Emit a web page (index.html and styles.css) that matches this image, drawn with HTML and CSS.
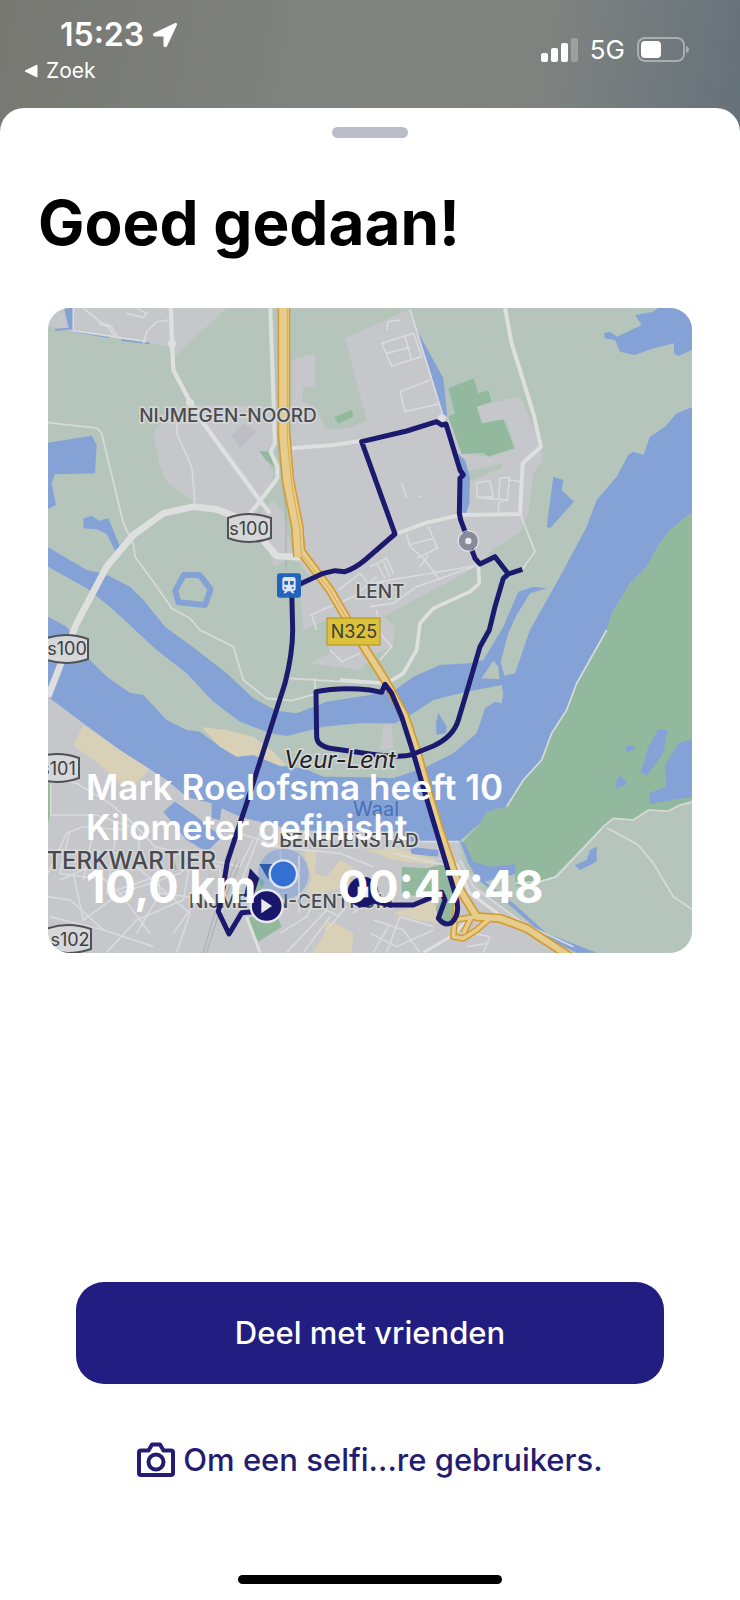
FILE: index.html
```html
<!DOCTYPE html>
<html lang="nl">

<head>
    <meta charset="UTF-8" />
    <meta name="viewport" content="width=device-width, initial-scale=1.0" />
    <link rel="stylesheet" href="styles.css">
    <title>Goed gedaan!</title>
</head>

<body>
    <header class="status-bar">
        <div class="status-left">
            <div class="clock">
                <span>15:23</span>
                <svg width="26" height="26" viewBox="0 0 26 26" aria-hidden="true">
                    <path d="M23.500 2 2.500 11.800C1.500 12.300 1.700 13.500 2.800 13.500H12.500V23.200C12.500 24.300 13.700 24.500 14.200 23.500L24 2.500C24.200 2 24 1.800 23.500 2z" fill="#fff" stroke="#fff" stroke-width="2" stroke-linejoin="round" />
                </svg>
            </div>
            <a class="back-link" href="#">
                <svg width="14" height="14" viewBox="0 0 14 14" aria-hidden="true">
                    <path d="M13 1v12L1 7z" fill="#fff" stroke="#fff" stroke-linejoin="round" />
                </svg>
                <span>Zoek</span>
            </a>
        </div>
        <div class="status-right">
            <svg width="38" height="25" viewBox="0 0 38 25" aria-hidden="true">
                <rect x="1" y="15" width="7" height="9" rx="2" fill="#fff" />
                <rect x="11" y="10" width="7" height="14" rx="2" fill="#fff" />
                <rect x="21" y="5" width="7" height="19" rx="2" fill="#fff" />
                <rect x="31" y="0" width="7" height="24" rx="2" fill="#fff" opacity=".25" />
            </svg>
            <span>5G</span>
            <svg width="53" height="26" viewBox="0 0 53 26" aria-hidden="true">
                <rect x="1" y="1" width="46" height="23" rx="7" fill="none" stroke="#fff" stroke-width="2" opacity=".4" />
                <rect x="4" y="4" width="20" height="17" rx="4" fill="#fff" />
                <path d="M49 9c4 1 4 6 0 7z" fill="#fff" opacity=".4" />
            </svg>
        </div>
    </header>

    <main class="sheet">
        <div class="handle"></div>
        <h1>Goed gedaan!</h1>

        <section class="map-card">
            <svg class="map" viewBox="0 0 644 645" role="img" aria-label="Route">
                <g transform="translate(-8 -8) scale(.33333)">
                    <rect x="24" y="24" width="1932" height="1935" fill="#b5c5bb" />

                    <!-- built-up areas -->
                    <g class="urban">
                        <path d="M24 24H560L405 168 385 140 330 130 100 95 24 78z" />
                        <path d="M340 400 395 325 500 315 700 320 705 430 670 460 700 520 690 560 650 640 600 660 520 620 465 608 380 545 360 500z" />
                        <path d="M660 640 700 600 730 640 760 770 820 840 780 870 790 990 860 960 870 1060 810 1090 960 1110 1010 1060 1060 1040 1065 980 1030 950 1320 795 1360 745 1440 700 1465 640 1480 520 1510 480 1500 430 1440 288 1310 320 1330 370 1400 360 1425 445 1345 470 1265 460 1220 340 1110 28 915 115 980 360 930 385 858 388 825 318 785 305 790 262 825 260 825 160 755 180 755 440 762 580 800 740 760 770 700 800z" />
                        <path d="M24 1190 130 1270 380 1440 515 1510 515 1550 545 1525 600 1550 760 1590 990 1595 1120 1625 1255 1625 1275 1700 1340 1790 1600 1958H24z" />
                        <path d="M1030 1275 1055 1275 1060 1345 1020 1350z" />
                    </g>
                    <path d="M575 405 610 372 650 395 600 445z" fill="#bdbec3" />
                    <path d="M1265 518 1390 488 1385 505 1310 535 1275 550z" fill="#b5c5bb" />

                    <!-- parks -->
                    <g class="park">
                        <path d="M1225 265 1300 235 1315 280 1345 270 1355 305 1310 320 1325 370 1390 358 1423 445 1345 470 1330 458 1265 462 1225 350 1245 340z" />
                        <path d="M882 352 935 330 940 350 895 371z" />
                        <path d="M658 452 690 455 702 500 675 478z" />
                        <path d="M1956 625 1890 690 1855 735 1820 800 1770 850 1715 940 1700 990 1610 1150 1580 1230 1540 1290 1505 1380 1450 1440 1400 1520 1340 1535 1320 1570 1270 1625 1290 1680 1340 1705 1425 1695 1425 1760 1500 1745 1540 1730 1690 1580 1720 1555 1780 1560 1825 1530 1885 1533 1956 1500z" />
                        <path d="M1085 1700 1160 1705 1220 1690 1245 1790 1255 1850 1225 1865 1200 1860 1185 1830 1205 1790 1085 1785z" />
                        <path d="M620 1855 705 1835 725 1880 655 1925z" />
                        <path d="M655 1730 675 1745 650 1800 640 1780z" />
                        <path d="M405 1680 410 1710 392 1710z" />
                        <path d="M24 1450 32 1450 30 1545 24 1570z" />
                    </g>

                    <!-- sand -->
                    <g class="sand">
                        <path d="M130 1275 240 1350 330 1405 290 1450 240 1450 180 1395 100 1335z" />
                        <path d="M860 1865 885 1868 940 1900 935 1958H815L850 1910z" />
                        <path d="M790 1650 830 1655 825 1720 860 1730 900 1680 940 1700 925 1760 840 1780 800 1775 815 1730z" />
                        <path d="M980 1650 1080 1645 1190 1680 1180 1695 1060 1680z" />
                        <path d="M1060 1840 1180 1800 1200 1870 1130 1860z" />
                    </g>

                    <!-- water -->
                    <g class="water">
                        <path d="M72 24H100L98 92 85 80z" />
                        <path d="M24 428 155 407 170 435 165 520 45 523 35 550 48 615 24 627z" />
                        <path d="M130 655 155 648 178 662 205 655 240 740 225 752 200 702 170 688 130 685z" />
                        <path d="M1785 45 1840 35 1855 24H1956V150L1915 168 1902 160 1902 130 1840 145 1785 165 1740 155 1725 120 1695 115 1692 100 1710 95 1730 110 1805 75z" />
                        <path d="M1125 80 1210 235 1222 350 1205 340 1170 210z" />
                        <path d="M1240 450 1275 480 1290 530 1288 610 1275 650 1262 640 1265 530z" />
                        <path d="M1540 530 1570 540 1565 570 1602 605 1530 685 1520 680z" />
                        <!-- Spiegelwaal and Waal -->
                        <path d="M24 742 140 810 195 822 270 860 310 900 375 980 470 1050 560 1120 640 1195 710 1232 770 1240 860 1205 990 1185 1065 1170 1120 1130 1200 1095 1290 1090 1330 1080 1390 980 1435 875 1480 860 1520 865 1470 880 1430 945 1405 1000 1382 1085 1393 1127 1425 1120 1470 990 1560 830 1640 680 1670 600 1730 530 1765 465 1780 455 1810 465 1830 410 1875 380 1910 340 1956 322V635L1890 690 1855 735 1820 800 1770 850 1715 940 1700 990 1610 1150 1580 1230 1540 1290 1505 1380 1450 1440 1400 1520 1340 1535 1320 1570 1260 1622 1120 1625 990 1595 760 1590 600 1550 545 1525 540 1560 515 1555 515 1510 440 1490 380 1440 240 1350 130 1270 24 1190V950L80 980 145 1075 200 1130 270 1178 310 1185 380 1260 440 1290 480 1295 540 1340 590 1370 640 1365 720 1398 790 1405 850 1430 990 1432 1060 1435 1160 1400 1240 1360 1310 1300 1335 1225 1365 1205 1385 1210 1390 1180 1385 1155 1280 1175 1180 1200 1120 1240 1065 1270 960 1270 850 1280 740 1308 690 1300 600 1265 520 1205 440 1120 350 1050 275 980 215 925 140 865 24 800z" />
                        <path d="M370 1535 405 1505 470 1550 545 1612 500 1655 440 1620z" />
                        <path d="M1110 1640 1195 1650 1195 1670 1115 1662z" />
                        <path d="M1260 1622 1275 1630 1300 1685 1350 1700 1425 1693 1425 1722 1335 1745 1420 1810 1520 1900 1670 1958H1610L1520 1915 1420 1825 1310 1735 1285 1690z" />
                        <path d="M1855 1288 1883 1290 1870 1360 1820 1428 1802 1415 1825 1340z" />
                        <path d="M1755 1340 1780 1335 1785 1348 1760 1358z" />
                        <path d="M1740 1425 1762 1450 1730 1468 1725 1452z" />
                        <path d="M1956 1318 1915 1330 1875 1395 1878 1460 1830 1478 1828 1512 1956 1490z" />
                        <path d="M1670 1640V1685L1620 1710 1605 1695 1640 1680 1650 1650z" />
                        <path d="M1195 1238 1220 1280 1218 1300 1190 1305 1188 1270z" />
                    </g>
                    <path d="M100 93 210 112M245 120 328 130M45 90 100 85" fill="none" stroke="#84a2d6" stroke-width="6" />
                    <path d="M432 824 480 826 512 868 495 915 415 907 406 872z" fill="none" stroke="#84a2d6" stroke-width="18" stroke-linejoin="round" />
                    <path d="M1325 1135 1360 1082 1375 1100 1378 1138z" fill="#b5c5bb" />
                    <path class="sand" d="M485 1282 560 1290 640 1310 700 1355 740 1395 720 1398 640 1365 590 1370 540 1340z" />

                    <!-- minor streets -->
                    <g class="street">
                        <path d="M24 368 170 384 185 400 250 670 280 730 285 770 340 845 395 925 450 955 480 990 580 1040 610 1140 680 1195 755 1202 850 1175M750 1135 990 1150M825 1135V1175" />
                        <path d="M412 370 410 400 455 500 465 608M130 24 180 65 215 80 235 115M175 70 205 80 225 110M260 40 310 52 320 40 290 24M310 130 320 95 350 65 385 60M100 24V92L320 125" />
                        <path d="M1025 130 1120 100 1145 170 1055 198zM1040 160 1110 142M1095 110 1115 180M1040 90 1045 65 1080 60M1080 275 1170 240M1080 275 1095 335 1195 312M1110 28 1210 350M1085 548 1100 595M1135 588 1145 590" />
                        <path d="M1310 548 1350 543 1360 590 1312 593zM1380 535 1408 532 1402 600 1376 598zM1310 593 1375 598M1440 640 1485 755 1445 810M1408 540 1440 545M1376 635 1375 610 1395 600M1100 700 1110 740 1150 775 1200 840M1105 735 1180 715M1165 680 1192 745 1130 775M1140 800 1165 765M990 850 1320 795M990 920 1060 910 1130 860 1300 800M990 800 1040 775 1060 820M1010 790 1035 835M1030 785 1050 830M810 945 940 890 1010 830M815 945 830 990M895 870 960 820 985 850M870 1050 905 1085 960 1060M1010 930 1020 1000 1055 1040 1020 1080" />
                        <path d="M24 1430 110 1450 210 1510 290 1580 345 1640 500 1680 560 1690M32 1450V1545H170L270 1580M24 1720 80 1600 130 1580 260 1590M60 1650 250 1660M90 1590 60 1720 200 1740M160 1590 130 1740M230 1590 200 1780 350 1730M24 1790 90 1800 190 1890 340 1940M100 1720 130 1860 240 1780 330 1900M60 1740 150 1700 240 1780 420 1720 450 1690M300 1600 290 1700 450 1840 410 1958M345 1640 360 1780 290 1900M450 1690 430 1800 290 1860 200 1958M360 1780 530 1800M30 1850 190 1890M470 1680 540 1700 545 1840M400 1900 500 1760" />
                        <path d="M600 1600 720 1640 725 1720M640 1620 600 1700 560 1690M660 1600 590 1780M700 1640 900 1660 1000 1700M720 1900 800 1850 830 1790M740 1958 860 1830 900 1850M790 1958 870 1850M920 1820 860 1890M940 1840 1000 1780M1040 1958 1080 1850 1180 1880M1000 1860 1090 1890 1140 1958M990 1900 1070 1940 1180 1890M1050 1870 1000 1958M1300 1900 1350 1910 1330 1958M1280 1940 1345 1930" />
                        <path d="M1425 1750 1500 1745 1550 1730 1690 1580 1720 1555 1780 1560 1825 1530 1885 1533 1920 1515 1956 1507M1700 1583 1795 1635 1840 1690 1900 1790 1956 1828M1700 990 1610 1150 1580 1230 1535 1300 1505 1380 1450 1440 1400 1520M1120 1625 1255 1625M1260 1680 1300 1760 1450 1870 1600 1940M1060 1660 1190 1690 1260 1700" />
                    </g>
                    <path d="M708 380 738 640V810M590 1680 530 1820 490 1958M600 1690 540 1830 500 1958" fill="none" stroke="#aeb2b2" stroke-width="4" />

                    <!-- main roads -->
                    <g class="road">
                        <path d="M393 24 396 130 400 210 450 305 490 370 655 595 690 640" />
                        <path d="M691 24 705 430 692 455 712 500 712 535 655 610 630 640" stroke-width="12" />
                        <path d="M755 445 880 435 965 422M1068 702 1160 668 1260 645 1440 642 1448 490 1503 440 1480 340 1415 130 1395 24" stroke-width="12" />
                        <path d="M1315 795 1318 850 1290 875 1180 925 1140 970 1130 1050 1090 1120 1040 1150 900 1140" stroke-width="11" />
                        <path d="M24 1190 110 970 200 800 280 705 370 640 460 620 530 628 600 655 660 710 710 768 780 772" stroke-width="20" />
                        <path d="M620 1850 660 1958M1150 1958 1240 1905 1280 1860M1250 1690 1290 1780 1400 1860" stroke-width="9" />
                        <circle cx="396" cy="130" r="6" />
                        <circle cx="450" cy="308" r="6" />
                        <circle cx="1205" cy="355" r="6" />
                    </g>

                    <!-- N325 -->
                    <g fill="none" stroke-linejoin="round">
                        <path d="M732 20V400L744 540 772 680 778 770" stroke="#d49b2e" stroke-width="38" />
                        <path d="M780 750 870 870 940 990 1035 1140 1095 1250 1132 1360 1165 1480 1198 1590 1260 1770 1310 1850 1380 1855 1460 1885 1590 1970" stroke="#d49b2e" stroke-width="28" />
                        <path d="M1250 1800 1240 1910 1270 1915 1310 1890 1350 1855M1240 1860 1310 1850M1270 1900 1295 1850" stroke="#d49b2e" stroke-width="20" />
                        <path d="M732 20V400L744 540 772 680 778 770" stroke="#e6cc8d" stroke-width="29" />
                        <path d="M780 750 870 870 940 990 1035 1140 1095 1250 1132 1360 1165 1480 1198 1590 1260 1770 1310 1850 1380 1855 1460 1885 1590 1970" stroke="#e6cc8d" stroke-width="18" />
                        <path d="M1250 1800 1240 1910 1270 1915 1310 1890 1350 1855M1240 1860 1310 1850M1270 1900 1295 1850" stroke="#e6cc8d" stroke-width="11" />
                        <path d="M742 24V420L756 560 780 690 784 762 870 870 940 990" stroke="#d9ac50" stroke-width="3" />
                    </g>
                </g>

                <!-- place names -->
                <g class="labels">
                    <text x="180" y="114" text-anchor="middle">NIJMEGEN-NOORD</text>
                    <text x="332" y="290" text-anchor="middle">LENT</text>
                    <text x="301" y="539" text-anchor="middle">BENEDENSTAD</text>
                    <text x="141" y="600">NIJMEGEN-CENTRUM</text>
                    <text class="label-big" x="168" y="561" text-anchor="end">TERKWARTIER</text>
                    <text class="label-water" x="328" y="508" text-anchor="middle">Waal</text>
                </g>

                <!-- road shields -->
                <g class="shields">
                    <path d="M180 210Q201 202 223 210V230Q201 238 180 230z" />
                    <path d="M-4 331Q18 323 40 331V351Q18 359 -4 351z" />
                    <path d="M-12 450Q9 442 31 450V470Q9 478 -12 470z" />
                    <path d="M-2 621Q20 613 43 621V641Q20 649 -2 641z" />
                    <rect class="shield-n" x="279" y="310" width="53" height="27" />
                    <text x="201" y="227" text-anchor="middle">s100</text>
                    <text x="19" y="347" text-anchor="middle">s100</text>
                    <text x="10" y="467" text-anchor="middle">s101</text>
                    <text x="22" y="638" text-anchor="middle">s102</text>
                    <text x="306" y="330" text-anchor="middle">N325</text>
                </g>

                <g transform="translate(-8 -8) scale(.33333)">
                    <!-- finished route -->
                    <path class="route" d="M640 1835 605 1838 567 1902 535 1835 550 1760 562 1685 620 1510 735 1150Q758 1060 758 990L755 860 785 850 850 820 885 812 915 815Q945 805 975 780L1065 702 965 425 1100 393 1190 365 1205 375 1218 372 1260 510 1270 525 1260 535 1258 640 1262 660 1305 775 1320 792 1365 770 1405 822 1447 808M1405 822 1390 835 1365 920 1348 990 1320 1040 1285 1160 1255 1260Q1240 1310 1180 1338L1120 1362Q1090 1375 990 1362L870 1345Q830 1335 830 1310L828 1175Q900 1160 990 1170L1025 1177 1035 1153 1055 1180 1085 1250 1120 1360 1155 1480 1245 1780Q1265 1840 1235 1868 1215 1880 1195 1855L1215 1800 1205 1777 1180 1790 1120 1815 1050 1815 990 1800" />
                    <path d="M630 1705 658 1735 640 1790 612 1790z" fill="#1c1a6c" />

                    <!-- station -->
                    <rect x="711" y="820" width="72" height="73" rx="9" fill="#2163bd" />
                    <path d="M735 831h24q8 0 8 8v26q0 8-8 8l5 7h-8l-5-6h-8l-5 6h-8l5-7q-8 0-8-8v-26q0-8 8-8z" fill="#dbe4f0" />
                    <path d="M733 843h11v11h-11zM750 843h11v11h-11z" fill="#2163bd" />
                    <circle cx="736" cy="864" r="3" fill="#2163bd" />
                    <circle cx="758" cy="864" r="3" fill="#2163bd" />

                    <circle cx="1285" cy="723" r="19" fill="#e8e8ea" stroke="#878c9a" stroke-width="19" />
                    <circle cx="1285" cy="723" r="31" fill="none" stroke="#e8e8ea" stroke-width="3" />

                    <!-- current position -->
                    <circle cx="730" cy="1722" r="76" fill="#5f8fdc" opacity=".38" />
                    <path d="M658 1692 710 1692 685 1738z" fill="#2c5cae" />
                    <circle cx="730" cy="1722" r="41" fill="#346fd2" stroke="#dfe5ee" stroke-width="7" />
                    <path d="M777 1668V1840" stroke="#dcdde0" stroke-width="4" />

                    <!-- start and finish -->
                    <circle cx="680" cy="1818" r="48" fill="#19176b" stroke="#e9e9ee" stroke-width="7" />
                    <path d="M664 1796 696 1818 664 1840z" fill="#e9e9ee" />
                    <circle cx="969" cy="1776" r="46" fill="#19176b" />
                    <rect x="953" y="1760" width="32" height="32" fill="#e9e9ee" />
                </g>
                <text class="label-island" x="292" y="460" text-anchor="middle">Veur-Lent</text>
            </svg>
            <div class="map-caption">
                <p class="result">Mark Roelofsma heeft 10 Kilometer gefinisht</p>
                <div class="stats">
                    <span>10,0 km</span>
                    <span>00:47:48</span>
                </div>
            </div>
        </section>

        <div class="actions">
            <button class="btn btn-primary" type="button">Deel met vrienden</button>
            <button class="btn btn-link" type="button">
                <svg width="38" height="36" viewBox="0 0 38 36" aria-hidden="true">
                    <path d="M4 8.500h7.500l3.500-6h8l3.500 6H34q2 0 2 2V31q0 2-2 2H4q-2 0-2-2V10.500q0-2 2-2z" fill="none" stroke="#221d70" stroke-width="4" stroke-linejoin="round" />
                    <circle cx="19" cy="20" r="7.500" fill="none" stroke="#221d70" stroke-width="4" />
                </svg>
                <span>Om een selfi...re gebruikers.</span>
            </button>
        </div>
        <div class="home-bar"></div>
    </main>
</body>

</html>
```
FILE: styles.css
```css
* {
    box-sizing: border-box;
    margin: 0;
    padding: 0;
}

body {
    display: flex;
    flex-direction: column;
    min-height: 100vh;
    background: linear-gradient(100deg, #777872 0, #81837f 45%, #7d8280 75%, #647079 100%) top / 100% 160px no-repeat #fff;
    font-family: Inter, "Liberation Sans", sans-serif;
}

.status-bar {
    display: flex;
    justify-content: space-between;
    align-items: flex-start;
    height: 108px;
    padding: 16px 50px 0 24px;
    color: #fff;
}

.clock {
    display: flex;
    align-items: center;
    gap: 8px;
    padding-left: 36px;
    font-size: 32px;
    font-weight: 600;
    line-height: 38px;
}

.back-link {
    display: flex;
    align-items: center;
    gap: 8px;
    color: #fff;
    font-size: 21px;
    font-weight: 400;
    line-height: 34px;
    text-decoration: none;
}

.status-right {
    display: flex;
    align-items: center;
    gap: 12px;
    padding-top: 16px;
    font-size: 26px;
    font-weight: 400;
    line-height: 36px;
}

.sheet {
    display: flex;
    flex: 1;
    flex-direction: column;
    padding: 19px 38px 16px;
    border-radius: 24px 24px 0 0;
    background: #fff;
}

.handle {
    width: 76px;
    height: 11px;
    align-self: center;
    border-radius: 6px;
    background: #babcca;
}

h1 {
    margin-top: 46px;
    color: #000;
    font-size: 62px;
    font-weight: 700;
    line-height: 78px;
}

.map-card {
    position: relative;
    margin: 46px 10px 0;
    overflow: hidden;
    border-radius: 22px;
}

.map {
    display: block;
    width: 100%;
    height: auto;
}

.urban {
    fill: #c6c7cb;
}

.park {
    fill: #92b99d;
}

.sand {
    fill: #d9d0b8;
}

.water {
    fill: #84a2d6;
}

.street {
    fill: none;
    stroke: #d9dadc;
    stroke-width: 5px;
}

.road {
    fill: none;
    stroke: #dedfdf;
    stroke-width: 13px;
    stroke-linejoin: round;
}

.route {
    fill: none;
    stroke: #1c1a6c;
    stroke-width: 15px;
    stroke-linejoin: round;
}

.labels text {
    fill: #494a4d;
    stroke: #d5d7d8;
    stroke-width: 3px;
    paint-order: stroke;
    font-size: 19px;
    font-weight: 500;
}

.labels .label-big {
    font-size: 24px;
}

.labels .label-water {
    fill: #4a70b5;
    stroke: none;
    font-size: 20px;
    font-weight: 400;
}

.label-island {
    fill: #222;
    stroke: #d5d7d8;
    stroke-width: 3px;
    paint-order: stroke;
    font-size: 24px;
    font-style: italic;
}

.shields path {
    fill: #d6d7d9;
    stroke: #505255;
    stroke-width: 2px;
}

.shields .shield-n {
    fill: #dcc23a;
    stroke: #b08f1e;
    stroke-width: 1px;
}

.shields text {
    fill: #3d3e40;
    font-size: 18px;
}

/* text on top of the map */
.map-caption {
    position: absolute;
    right: 38px;
    bottom: 40px;
    left: 38px;
    color: #fff;
}

.result {
    max-width: 460px;
    font-size: 35px;
    font-weight: 600;
    line-height: 40px;
}

.stats {
    display: grid;
    grid-template-columns: 252px auto;
    margin-top: 14px;
    font-size: 45px;
    font-weight: 700;
    line-height: 52px;
}

.actions {
    display: flex;
    flex-direction: column;
    gap: 50px;
    margin: auto 38px 0;
    padding-bottom: 89px;
}

.btn {
    border: 0;
    background: none;
    font-family: inherit;
    font-size: 31px;
    font-weight: 500;
    cursor: pointer;
}

.btn-primary {
    padding: 32px;
    border-radius: 28px;
    background: #221d80;
    color: #fff;
    line-height: 38px;
}

.btn-link {
    display: flex;
    justify-content: center;
    align-items: center;
    gap: 8px;
    color: #221d70;
    line-height: 52px;
}

.home-bar {
    width: 264px;
    height: 9px;
    align-self: center;
    border-radius: 5px;
    background: #000;
}
```
